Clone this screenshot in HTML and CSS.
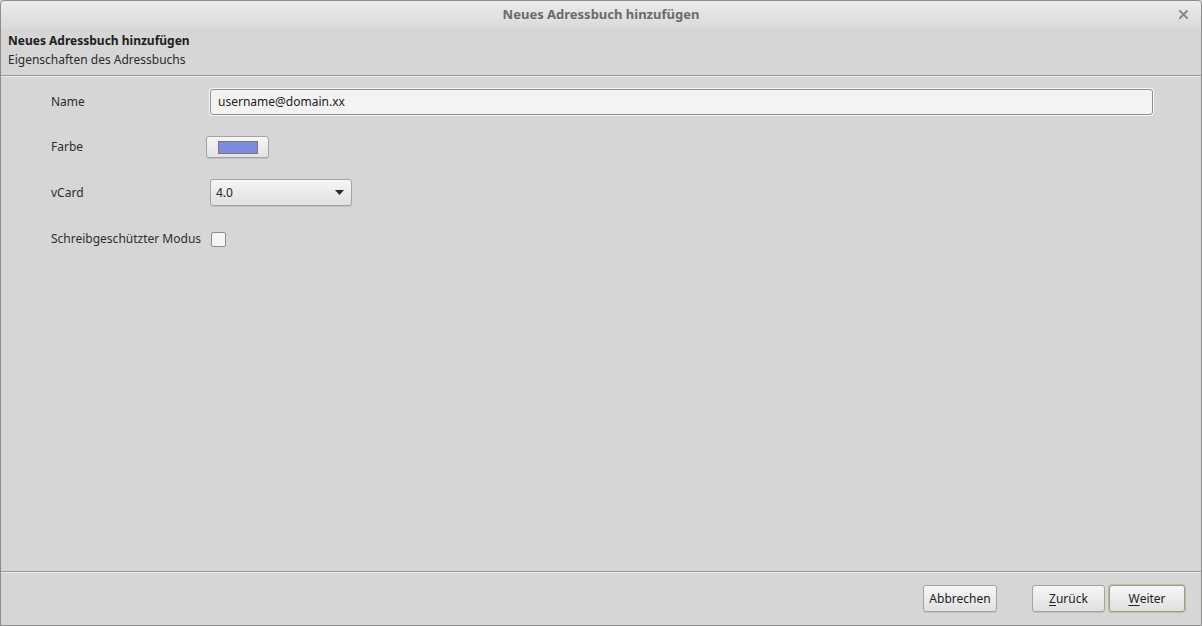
FILE: index.html
```html
<!DOCTYPE html>
<html lang="de">
<head>
<meta charset="utf-8">
<title>Neues Adressbuch hinzufügen</title>
<link rel="stylesheet" href="styles.css">
</head>
<body>
<div class="window">
  <div class="titlebar">
    <span class="title">Neues Adressbuch hinzufügen</span>
    <span class="close"><svg width="9" height="9" viewBox="0 0 9 9"><path d="M1 1 L8 8 M8 1 L1 8" stroke="#8a8a8a" stroke-width="2" stroke-linecap="round"/></svg></span>
  </div>
  <div class="header">
    <div class="h-title">Neues Adressbuch hinzufügen</div>
    <div class="h-sub">Eigenschaften des Adressbuchs</div>
  </div>
  <div class="body">
    <div class="row row-name">
      <div class="label">Name</div>
      <div class="input">username@domain.xx</div>
    </div>
    <div class="row row-color">
      <div class="label">Farbe</div>
      <div class="colorbtn"><span class="swatch"></span></div>
    </div>
    <div class="row row-vcard">
      <div class="label">vCard</div>
      <div class="combo"><span>4.0</span><svg width="9" height="5" viewBox="0 0 9 5"><path d="M0 0 H9 L4.5 5 Z" fill="#2a2a2a"/></svg></div>
    </div>
    <div class="row row-ro">
      <div class="label">Schreibgeschützter Modus</div>
      <div class="check"></div>
    </div>
  </div>
  <div class="footer">
    <div class="btn btn-cancel">Abbrechen</div>
    <div class="btn btn-back"><u>Z</u>urück</div>
    <div class="btn btn-next"><u>W</u>eiter</div>
  </div>
</div>
</body>
</html>
```
FILE: styles.css
```css
* { box-sizing: border-box; }
html, body { margin: 0; padding: 0; }
body {
  width: 1202px;
  height: 626px;
  overflow: hidden;
  font-family: "Noto Sans", "DejaVu Sans", sans-serif;
  font-size: 12px;
  color: #2e2e2e;
  background: #d6d6d6;
}
.window {
  width: 1202px;
  height: 626px;
  border: 1px solid #8c8c8c;
  border-radius: 4px 4px 0 0;
  background: #d6d6d6;
  display: flex;
  flex-direction: column;
}
.titlebar {
  height: 27px;
  flex: none;
  background: linear-gradient(#ebebeb, #dadada);
  display: flex;
  align-items: center;
  justify-content: center;
  position: relative;
  border-radius: 4px 4px 0 0;
}
.title {
  font-weight: bold;
  font-size: 13px;
  color: #6b6b6b;
  margin-top: -1px;
}
.close {
  position: absolute;
  right: 13px;
  top: 9px;
  width: 9px;
  height: 9px;
  display: flex;
}
.header {
  flex: none;
  height: 48px;
  padding: 3px 7px 0;
  border-bottom: 1px solid #9a9a9a;
  box-shadow: 0 1px 0 #ececec;
}
.h-title {
  font-weight: bold;
  height: 19px;
  line-height: 19px;
  color: #202020;
}
.h-sub {
  height: 19px;
  line-height: 19px;
  color: #2a2a2a;
}
.body {
  flex: 1;
  padding: 13px 48px 0 50px;
  display: flex;
  flex-direction: column;
  gap: 21px;
}
.row {
  display: flex;
  align-items: center;
}
.label {
  width: 159px;
  flex: none;
  white-space: nowrap;
  margin-top: -1px;
}
.row-name { height: 26px; }
.input {
  flex: 1;
  height: 26px;
  background: #f3f3f3;
  border: 1px solid #8f8f8f;
  border-radius: 3px;
  padding: 0 7px;
  line-height: 23px;
  color: #222;
  box-shadow: 0 0 0 1px #f6f6f6;
}
.row-color { height: 22px; }
.colorbtn {
  margin-left: -4px;
  width: 63px;
  height: 22px;
  border: 1px solid #a4a4a4;
  border-radius: 3px;
  background: linear-gradient(#f6f6f6, #e2e2e2);
  display: flex;
  align-items: center;
  justify-content: center;
  box-shadow: 0 1px 0 #c0c0c0;
}
.swatch {
  width: 40px;
  height: 13px;
  background: #7a8be0;
  border: 1px solid #777;
}
.row-vcard { height: 27px; }
.combo {
  width: 142px;
  height: 27px;
  border: 1px solid #a4a4a4;
  border-radius: 3px;
  background: linear-gradient(#f6f6f6, #e0e0e0);
  display: flex;
  align-items: center;
  justify-content: space-between;
  padding: 0 7px 0 5px;
  box-shadow: 0 1px 0 #c0c0c0;
  color: #222;
}
.row-ro { height: 24px; }
.row-ro .label { width: 160px; }
.check {
  width: 15px;
  height: 15px;
  border: 1px solid #8e8e8e;
  border-radius: 2px;
  background: #f5f5f5;
}
.footer {
  flex: none;
  height: 54px;
  border-top: 1px solid #9a9a9a;
  box-shadow: inset 0 1px 0 #ececec;
  display: flex;
  justify-content: flex-end;
  align-items: flex-start;
  padding: 13px 16px 0 0;
}
.btn {
  height: 27px;
  border: 1px solid #a4a4a4;
  border-radius: 3px;
  background: linear-gradient(#f6f6f6, #e0e0e0);
  display: flex;
  align-items: center;
  justify-content: center;
  color: #222;
  box-shadow: 0 1px 0 #c0c0c0;
}
.btn u { text-decoration-thickness: 1px; text-underline-offset: 2px; }
.btn-cancel { width: 74px; margin-right: 35px; }
.btn-back { width: 73px; margin-right: 4px; }
.btn-next {
  width: 76px;
  border: 1px solid #9a9a9a;
  box-shadow: 0 0 0 1px #a9cc8c;
}
```
